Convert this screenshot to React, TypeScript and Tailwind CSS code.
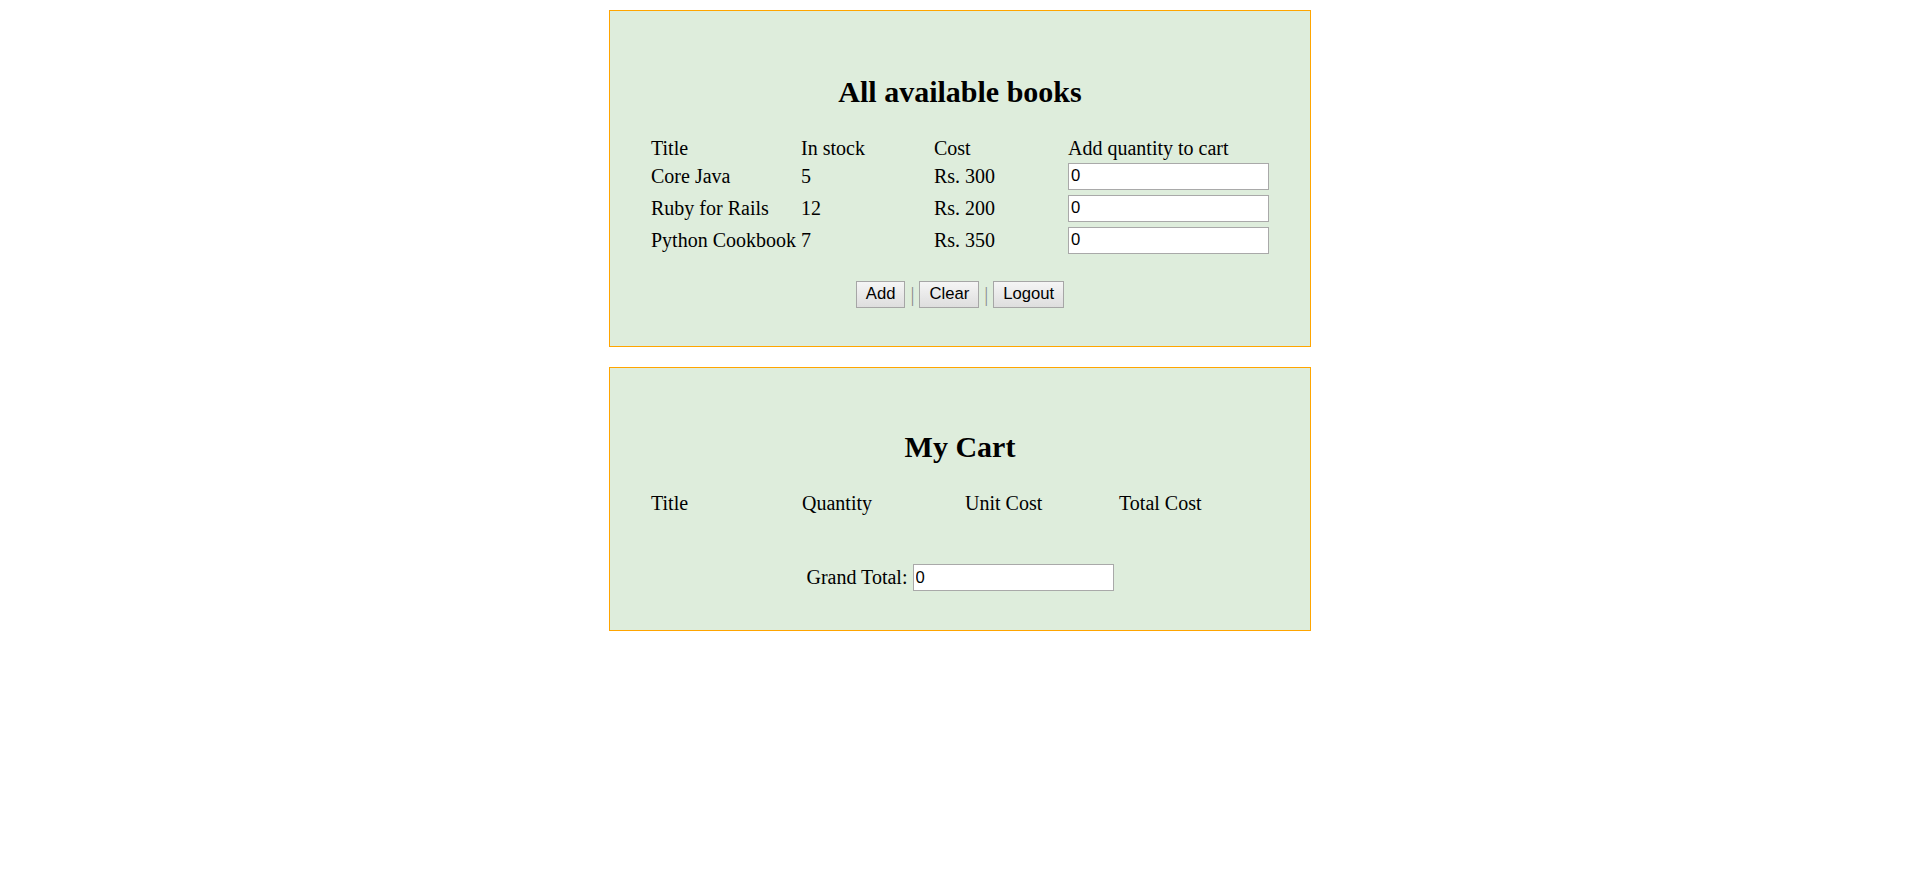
import React from 'react';

const books = [
  { title: 'Core Java', stock: 5, cost: 'Rs. 300' },
  { title: 'Ruby for Rails', stock: 12, cost: 'Rs. 200' },
  { title: 'Python Cookbook', stock: 7, cost: 'Rs. 350' },
];

const QtyInput: React.FC<{ value?: string }> = ({ value = '0' }) => (
  <input
    type="text"
    defaultValue={value}
    className="w-[201px] h-[27px] border border-[#a9a9a9] bg-white px-[2px] text-[16.67px] text-black font-['Liberation_Sans',Arial,sans-serif] outline-none"
  />
);

const Btn: React.FC<{ label: string }> = ({ label }) => (
  <button className="h-[27px] px-[9px] border border-[#a6a6a6] bg-gradient-to-b from-[#f5f5f5] to-[#dedede] text-[16.67px] leading-none text-black font-['Liberation_Sans',Arial,sans-serif]">
    {label}
  </button>
);

const App: React.FC = () => {
  return (
    <div className="min-h-screen bg-white pt-[10px] flex flex-col items-center gap-[20px] font-['Liberation_Serif','Times_New_Roman',serif] text-black text-[20px] leading-[23px]">
      {/* Books */}
      <section className="w-[702px] border border-[#ffa500] bg-[#deeddc] pt-[63px] pb-[38px]">
        <h2 className="text-center text-[30px] font-bold leading-[35px]">All available books</h2>

        <div className="mt-[27px] ml-[41px]">
          <div className="grid grid-cols-[150px_133px_134px_201px] h-[24px] items-center">
            <span>Title</span>
            <span>In stock</span>
            <span>Cost</span>
            <span>Add quantity to cart</span>
          </div>
          {books.map((b) => (
            <div key={b.title} className="grid grid-cols-[150px_133px_134px_201px] h-[32px] items-center">
              <span className="whitespace-nowrap">{b.title}</span>
              <span>{b.stock}</span>
              <span>{b.cost}</span>
              <QtyInput />
            </div>
          ))}
        </div>

        <div className="mt-[25px] h-[27px] flex items-center justify-center">
          <Btn label="Add" />
          <span className="px-[5px] text-[#8a8a8a]">|</span>
          <Btn label="Clear" />
          <span className="px-[5px] text-[#8a8a8a]">|</span>
          <Btn label="Logout" />
        </div>
      </section>

      {/* Cart */}
      <section className="w-[702px] border border-[#ffa500] bg-[#deeddc] pt-[61px] pb-[39px]">
        <h2 className="text-center text-[30px] font-bold leading-[35px]">My Cart</h2>

        <div className="mt-[27px] ml-[41px] grid grid-cols-[151px_163px_154px_150px] h-[24px] items-center">
          <span>Title</span>
          <span>Quantity</span>
          <span>Unit Cost</span>
          <span>Total Cost</span>
        </div>

        <div className="mt-[49px] flex items-center justify-center">
          <span className="mr-[5px]">Grand Total:</span>
          <QtyInput />
        </div>
      </section>
    </div>
  );
};

export default App;
